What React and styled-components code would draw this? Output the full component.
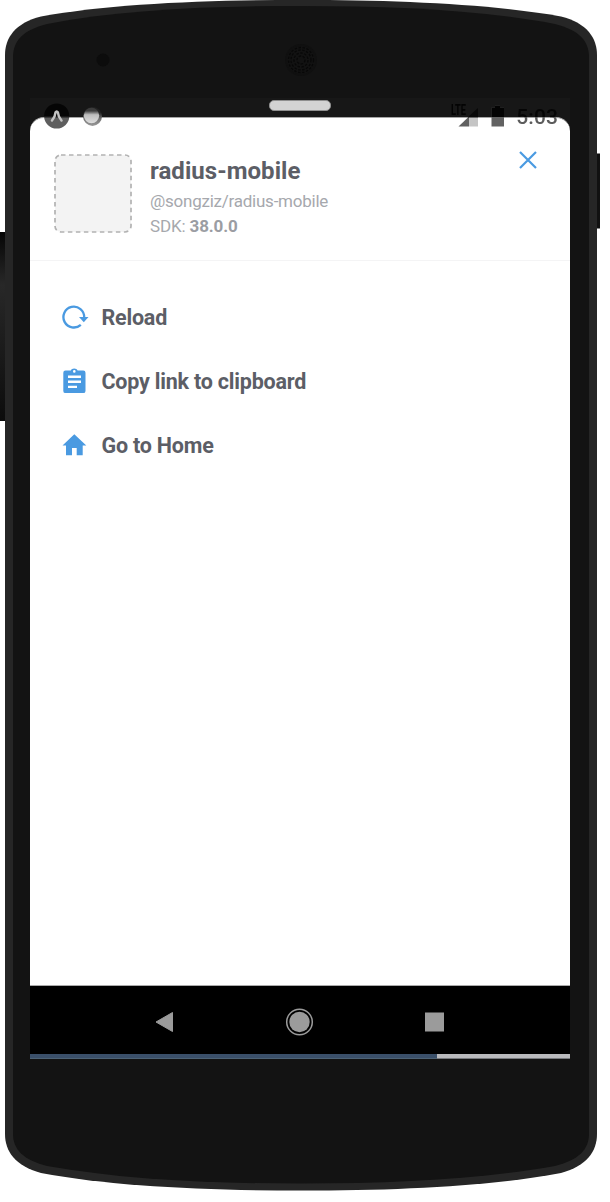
import React from "react";
import styled, { createGlobalStyle } from "styled-components";

const GlobalStyle = createGlobalStyle`
  body { margin: 0; background: #fff; font-family: Roboto, "Liberation Sans", sans-serif; }
  * { box-sizing: border-box; }
`;

const Phone = styled.main`
  position: relative;
  width: 600px;
  height: 1191px;
  padding: 98px 30px 0;
`;

const Chassis = styled.svg`
  position: absolute;
  inset: 0;
  display: block;
`;

const Screen = styled.div`
  position: relative;
  width: 540px;
  height: 961px;
  display: flex;
  flex-direction: column;
  background: #171717;
`;

const Grip = styled.div`
  height: 19px;
  flex: none;
  display: flex;
  justify-content: center;
  padding: 2px 0 0;
  &::before {
    content: "";
    width: 60px;
    height: 9px;
    border-radius: 5px;
    background: #d3d3d3;
    border: 1px solid #8e8e8e;
  }
`;

const Sheet = styled.section`
  flex: 1;
  background: #fff;
  border-radius: 14px 14px 0 0;
  border-top: 1px solid #a5a5a5;
  border-bottom: 1px solid #aaa;
`;

const Header = styled.header`
  height: 143px;
  display: flex;
  align-items: flex-start;
  padding: 36px 32.5px 0 24px;
  border-bottom: 1px solid #f4f4f5;
`;

const AppIcon = styled.svg`
  flex: none;
  margin-right: 18px;
`;

const AppInfo = styled.div`
  flex: 1;
  white-space: nowrap;
`;

const Title = styled.h1`
  margin: 3px 0 0;
  font-size: 24px;
  line-height: 28px;
  font-weight: 700;
  letter-spacing: 0.05px;
  color: #5c5e66;
`;

const Detail = styled.p`
  margin: 0;
  padding-top: ${(p) => p.$gap || 0}px;
  font-size: 17px;
  line-height: ${(p) => p.$line || 25}px;
  letter-spacing: ${(p) => p.$tracking || 0}px;
  color: #a6a8ad;
  b { font-weight: 700; color: #9b9da3; }
`;

const CloseButton = styled.button`
  border: 0;
  padding: 0;
  margin-top: -4px;
  background: none;
  line-height: 0;
`;

const Menu = styled.nav`
  padding: 24px 30px;
`;

const MenuItem = styled.button`
  width: 100%;
  height: 64px;
  display: flex;
  align-items: center;
  border: 0;
  padding: 1px 0 0;
  background: none;
  color: #5c5e66;
  font: 700 21.5px/28px Roboto, "Liberation Sans", sans-serif;
  letter-spacing: -0.21px;
  svg { margin-right: 12.5px; flex: none; }
`;

const NavBar = styled.footer`
  height: 68px;
  flex: none;
  display: flex;
  align-items: center;
  justify-content: space-between;
  padding: 3px 120px 0;
  background: #000;
`;

const Progress = styled.div`
  height: 5px;
  flex: none;
  background: #b9babd;
  border-bottom: 1px solid #76797d;
`;

const Played = styled.div`
  width: 406.5px;
  height: 5px;
  background: #3a4f69;
  border-bottom: 1px solid #4d6275;
`;

const StatusBar = styled.div`
  position: absolute;
  top: 0;
  left: 0;
  right: 0;
  height: 34px;
  display: flex;
  justify-content: space-between;
  padding: 4px 12px 0 13px;
`;

const StatusGroup = styled.div`
  display: flex;
  align-items: flex-start;
`;

const Clock = styled.time`
  margin-left: 11px;
  font-size: 21px;
  line-height: 30px;
  font-weight: 500;
  letter-spacing: 0.1px;
  background: linear-gradient(#050505 15px, #5c5c5c 15px);
  background-clip: text;
  color: transparent;
`;

const Network = styled.span`
  width: 16px;
  margin: 2px -9px 0 0;
  font-size: 14px;
  line-height: 12px;
  font-weight: 700;
  transform: scaleX(0.66);
  transform-origin: left top;
  color: #030303;
`;

const blue = "#4a9ae1";
const speakerRings = [4, 7, 10, 12.5];

function PhoneChassis() {
  return (
    <Chassis width="600" height="1191" viewBox="0 0 600 1191" aria-hidden="true">
      <defs>
        <linearGradient id="side" x1="0" y1="0" x2="0" y2="1">
          <stop offset="0" stopColor="#050505" />
          <stop offset=".28" stopColor="#282828" />
          <stop offset="1" stopColor="#0c0c0c" />
        </linearGradient>
      </defs>
      <rect x="-5" y="232" width="15" height="189" rx="3" fill="url(#side)" />
      <rect x="590" y="153.500" width="10" height="75" fill="#111" />
      <path d="M5 55C5 38 15 23 41 16.500C110 4 205 0 301 0S492 4 561 16.500C587 23 597 38 597 55V1134C597 1151 587 1166 561 1173C492 1186 399 1190.500 301 1190.500S110 1186 41 1173C15 1166 5 1151 5 1134Z" fill="#262626" />
      <path d="M13 57C13 41 23 30 47 24C121 10 207 6 301 6S481 10 555 24C579 30 589 41 589 57V1134C589 1149 579 1160 555 1166C482 1179 397 1183.500 301 1183.500S120 1179 47 1166C23 1160 13 1149 13 1134Z" fill="#131313" />
      <circle cx="103" cy="60" r="6.500" fill="#0c0c0c" />
      <circle cx="301" cy="60" r="16" fill="#101010" />
      <circle cx="301" cy="60" r="14" fill="#121212" />
      {speakerRings.map((r) => (
        <circle key={r} cx="301" cy="60" r={r} fill="none" stroke="#080808" strokeWidth="1.300" strokeDasharray="2.500 1.500" />
      ))}
    </Chassis>
  );
}

function ReloadIcon() {
  return (
    <svg width="29" height="28" viewBox="0 0 29 28" fill="none">
      <path d="M20.800 20.800A10.400 10.400 0 1 1 24.200 13.500" stroke={blue} strokeWidth="2.300" />
      <path d="M19 13H28.500L23.800 18.300Z" fill={blue} />
    </svg>
  );
}

function ClipboardIcon() {
  return (
    <svg width="29" height="28" viewBox="0 0 29 28">
      <path fillRule="evenodd" fill={blue} d="M5.500 2.500H10.800C11.400-.300 16.900-.300 17.600 2.500H23.300Q25.500 2.500 25.500 4.700V22.900Q25.500 25.100 23.300 25.100H5.500Q3.300 25.100 3.300 22.900V4.700Q3.300 2.500 5.500 2.500ZM14.300 2.100A1.300 1.300 0 1 0 14.300 4.700A1.300 1.300 0 1 0 14.300 2.100ZM8 7.600V9.900H21V7.600ZM8 12.600V14.900H21V12.600ZM8 17.700V20H17V17.700Z" />
    </svg>
  );
}

function HomeIcon() {
  return (
    <svg width="29" height="28" viewBox="0 0 29 28">
      <path fill={blue} d="M14.300 2.200L26.300 13.500H22.700V23.200H16.700V16H12V23.200H6V13.500H2.500Z" />
    </svg>
  );
}

const actions = [
  { label: "Reload", Icon: ReloadIcon },
  { label: "Copy link to clipboard", Icon: ClipboardIcon },
  { label: "Go to Home", Icon: HomeIcon },
];

function Status() {
  return (
    <StatusBar>
      <StatusGroup>
        <svg width="64" height="30" viewBox="0 0 64 30">
          <defs>
            <linearGradient id="ball" x1="0" y1="0" x2="0" y2="1">
              <stop offset=".2" stopColor="#3c3c3c" />
              <stop offset=".45" stopColor="#bdbdbd" />
              <stop offset="1" stopColor="#dedede" />
            </linearGradient>
            <linearGradient id="rim" x1="0" y1="0" x2="0" y2="1">
              <stop offset=".3" stopColor="#222" />
              <stop offset=".65" stopColor="#777" />
              <stop offset="1" stopColor="#999" />
            </linearGradient>
            <linearGradient id="badge" x1="0" y1="0" x2="0" y2="1">
              <stop offset=".5" stopColor="#050505" />
              <stop offset=".6" stopColor="#5e5e5e" />
            </linearGradient>
          </defs>
          <circle cx="13.700" cy="14" r="12.600" fill="url(#badge)" />
          <path d="M9 18.500Q12.300 14.500 12.500 10.500Q13.700 8.500 14.900 10.500Q15.100 14.500 18.500 18.500" fill="none" stroke="#c2c2c2" strokeWidth="2.500" strokeLinecap="round" />
          <circle cx="49.500" cy="14.400" r="9.500" fill="url(#rim)" />
          <circle cx="48.500" cy="13.500" r="7.700" fill="url(#ball)" />
        </svg>
      </StatusGroup>
      <StatusGroup>
        <Network>LTE</Network>
        <svg width="47" height="30" viewBox="0 0 47 30">
          <path d="M.500 24.500L11 14.500V24.500Z" fill="#606060" />
          <path d="M11 14.500H20V24.500H11Z" fill="#c5c5c5" />
          <path d="M9.500 15.500L20 6V15.500Z" fill="#080808" />
          <path d="M33.500 5.500H37V3.500H42V5.500H46V24.500H33.500Z" fill="#626262" />
          <path d="M33.500 5.500H37V3.500H42V5.500H46V15H33.500Z" fill="#030303" />
        </svg>
        <Clock>5:03</Clock>
      </StatusGroup>
    </StatusBar>
  );
}

export default function App() {
  return (
    <>
      <GlobalStyle />
      <Phone>
        <PhoneChassis />
        <Screen>
          <Grip />
          <Sheet>
            <Header>
              <AppIcon width="78" height="79" viewBox="0 0 78 79">
                <rect x="1" y="1" width="76" height="77" rx="6" fill="#f3f3f3" stroke="#b2b2b2" strokeWidth="1.700" strokeDasharray="4.500 3.500" />
              </AppIcon>
              <AppInfo>
                <Title>radius-mobile</Title>
                <Detail $gap={4} $tracking={-0.24}>@songziz/radius-mobile</Detail>
                <Detail $line={24} $tracking={-0.14}>SDK: <b>38.0.0</b></Detail>
              </AppInfo>
              <CloseButton aria-label="Close">
                <svg width="20" height="20" viewBox="0 0 20 20">
                  <path d="M2 2L18 18M18 2L2 18" stroke={blue} strokeWidth="2.200" />
                </svg>
              </CloseButton>
            </Header>
            <Menu>
              {actions.map(({ label, Icon }) => (
                <MenuItem key={label}><Icon />{label}</MenuItem>
              ))}
            </Menu>
          </Sheet>
          <NavBar>
            <svg width="30" height="30" viewBox="0 0 30 30"><path d="M6 15L22.500 5.500V24.500Z" fill="#9b9b9b" stroke="#9b9b9b" strokeLinejoin="round" /></svg>
            <svg width="30" height="30" viewBox="0 0 30 30"><circle cx="14.500" cy="15" r="12.800" fill="none" stroke="#9b9b9b" strokeWidth="1.500" /><circle cx="14.500" cy="15" r="10.200" fill="#9b9b9b" /></svg>
            <svg width="30" height="30" viewBox="0 0 30 30"><rect x="5" y="5.500" width="19" height="19" fill="#9b9b9b" /></svg>
          </NavBar>
          <Progress><Played /></Progress>
          <Status />
        </Screen>
      </Phone>
    </>
  );
}
